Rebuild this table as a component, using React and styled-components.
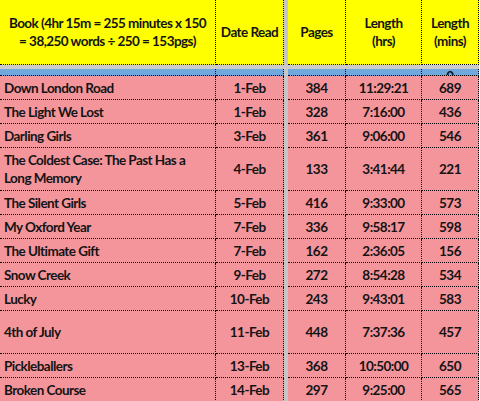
import styled, { createGlobalStyle } from "styled-components";

const GlobalStyle = createGlobalStyle`
  body {
    margin: 0;
    background: #ffffff;
    font-family: Lato, "Liberation Sans", sans-serif;
  }
`;

const COLS = "216px 68px 4px 58px 76px 57px";

const Sheet = styled.div`
  width: 480px;
  height: 401px;
  overflow: hidden;
  color: #141414;
  font-weight: 700;
  font-size: 13.5px;
  letter-spacing: -0.55px;
`;

const Row = styled.div`
  display: grid;
  grid-template-columns: ${COLS};
  height: ${(props) => props.height}px;
`;

const Cell = styled.div`
  box-sizing: border-box;
  background: ${(props) => props.bg};
  border-right: 1px dotted #000;
  border-bottom: 1px dotted #000;
  display: flex;
  align-items: ${(props) => (props.top ? "flex-start" : "center")};
  justify-content: ${(props) => (props.left ? "flex-start" : "center")};
  text-align: ${(props) => (props.left ? "left" : "center")};
  padding: ${(props) => (props.left ? "0 14px 0 4px" : "0")};
  line-height: 18px;
  white-space: ${(props) => (props.wrap ? "normal" : "nowrap")};
  overflow: hidden;
`;

const Divider = styled.div`
  background: #c6c6c6;
`;

const GrayBand = styled.div`
  height: 4px;
  width: 479px;
  background: #cbcbcb;
`;

const Peek = styled.span`
  display: block;
  margin-top: -1px;
  line-height: 16px;
`;

const YELLOW = "#ffff00";
const PINK = "#f4959c";
const BLUE = "#6fa8dc";

const books = [
  ["Down London Road", "1-Feb", "384", "11:29:21", "689"],
  ["The Light We Lost", "1-Feb", "328", "7:16:00", "436"],
  ["Darling Girls", "3-Feb", "361", "9:06:00", "546"],
  ["The Coldest Case: The Past Has a Long Memory", "4-Feb", "133", "3:41:44", "221", 43],
  ["The Silent Girls", "5-Feb", "416", "9:33:00", "573"],
  ["My Oxford Year", "7-Feb", "336", "9:58:17", "598"],
  ["The Ultimate Gift", "7-Feb", "162", "2:36:05", "156"],
  ["Snow Creek", "9-Feb", "272", "8:54:28", "534"],
  ["Lucky", "10-Feb", "243", "9:43:01", "583"],
  ["4th of July", "11-Feb", "448", "7:37:36", "457", 43],
  ["Pickleballers", "13-Feb", "368", "10:50:00", "650"],
  ["Broken Course", "14-Feb", "297", "9:25:00", "565"],
];

function App() {
  return (
    <Sheet>
      <GlobalStyle />
      <Row height={65}>
        <Cell bg={YELLOW}>
          Book (4hr 15m = 255 minutes x 150
          <br />= 38,250 words ÷ 250 = 153pgs)
        </Cell>
        <Cell bg={YELLOW}>Date Read</Cell>
        <Divider />
        <Cell bg={YELLOW}>Pages</Cell>
        <Cell bg={YELLOW}>
          Length
          <br />
          (hrs)
        </Cell>
        <Cell bg={YELLOW}>
          Length
          <br />
          (mins)
        </Cell>
      </Row>
      <GrayBand />
      <Row height={7}>
        <Cell bg={BLUE} />
        <Cell bg={BLUE} />
        <Divider />
        <Cell bg={BLUE} />
        <Cell bg={BLUE} />
        <Cell bg={BLUE} top>
          <Peek>0</Peek>
        </Cell>
      </Row>
      {books.map(([title, date, pages, hrs, mins, h]) => (
        <Row height={h || 24} key={title}>
          <Cell bg={PINK} left wrap>
            {title}
          </Cell>
          <Cell bg={PINK}>{date}</Cell>
          <Divider />
          <Cell bg={PINK}>{pages}</Cell>
          <Cell bg={PINK}>{hrs}</Cell>
          <Cell bg={PINK}>{mins}</Cell>
        </Row>
      ))}
    </Sheet>
  );
}

export default App;
